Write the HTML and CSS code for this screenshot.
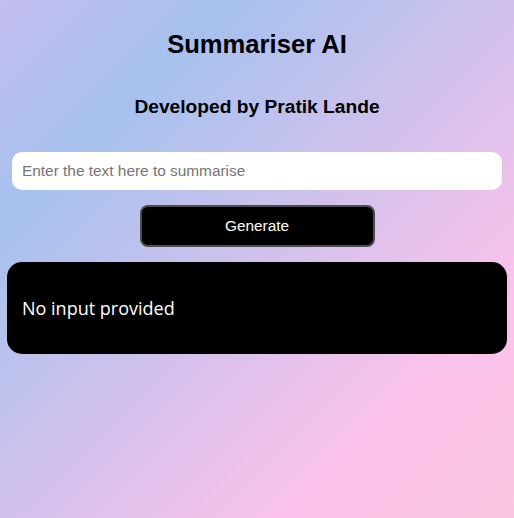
FILE: index.html
```html
<!DOCTYPE html>
<html lang="en">
<head>
<meta charset="utf-8">
<title>Summariser AI</title>
<link rel="stylesheet" href="styles.css">
</head>
<body>
<main class="app">
  <h1 class="title">Summariser AI</h1>
  <h3 class="subtitle">Developed by Pratik Lande</h3>
  <input class="text-input" type="text" placeholder="Enter the text here to summarise">
  <button class="generate-btn" type="button">Generate</button>
  <section class="output">
    <p class="output-text">No input provided</p>
  </section>
</main>
</body>
</html>
```
FILE: styles.css
```css
html, body {
  margin: 0;
  padding: 0;
  min-height: 100%;
}
body {
  min-height: 100vh;
  background: linear-gradient(135deg, #c4bdf0 0%, #a6c1ee 22%, #fbc2eb 78%, #fac6df 100%);
  font-family: "Liberation Sans", Arial, sans-serif;
  color: #000;
}
.app {
  display: flex;
  flex-direction: column;
  align-items: center;
}
.title {
  margin: 29px 0 0;
  font-size: 25.6px;
  line-height: 30px;
  font-weight: bold;
}
.subtitle {
  margin: 37px 0 0;
  font-size: 19.2px;
  line-height: 22px;
  font-weight: bold;
}
.text-input {
  box-sizing: border-box;
  margin-top: 34px;
  width: 490px;
  height: 38px;
  border: none;
  border-radius: 10px;
  background: #fff;
  padding: 0 10px;
  font-family: "Liberation Sans", Arial, sans-serif;
  font-size: 15.4px;
  color: #000;
  outline: none;
}
.text-input::placeholder {
  color: #757575;
}
.generate-btn {
  box-sizing: border-box;
  margin-top: 15px;
  width: 235px;
  height: 42px;
  border: 2px solid #4d4d4d;
  border-radius: 8px;
  background: #000;
  color: #fff;
  font-family: "Liberation Sans", Arial, sans-serif;
  font-size: 15.4px;
  padding: 0;
}
.output {
  box-sizing: border-box;
  margin-top: 15px;
  width: 500px;
  height: 92px;
  border-radius: 15px;
  background: #000;
  display: flex;
  align-items: center;
  padding: 0 15px;
}
.output-text {
  margin: 0;
  color: #fff;
  font-family: "Open Sans", "Noto Sans", sans-serif;
  font-size: 18px;
  line-height: 24px;
}
```
